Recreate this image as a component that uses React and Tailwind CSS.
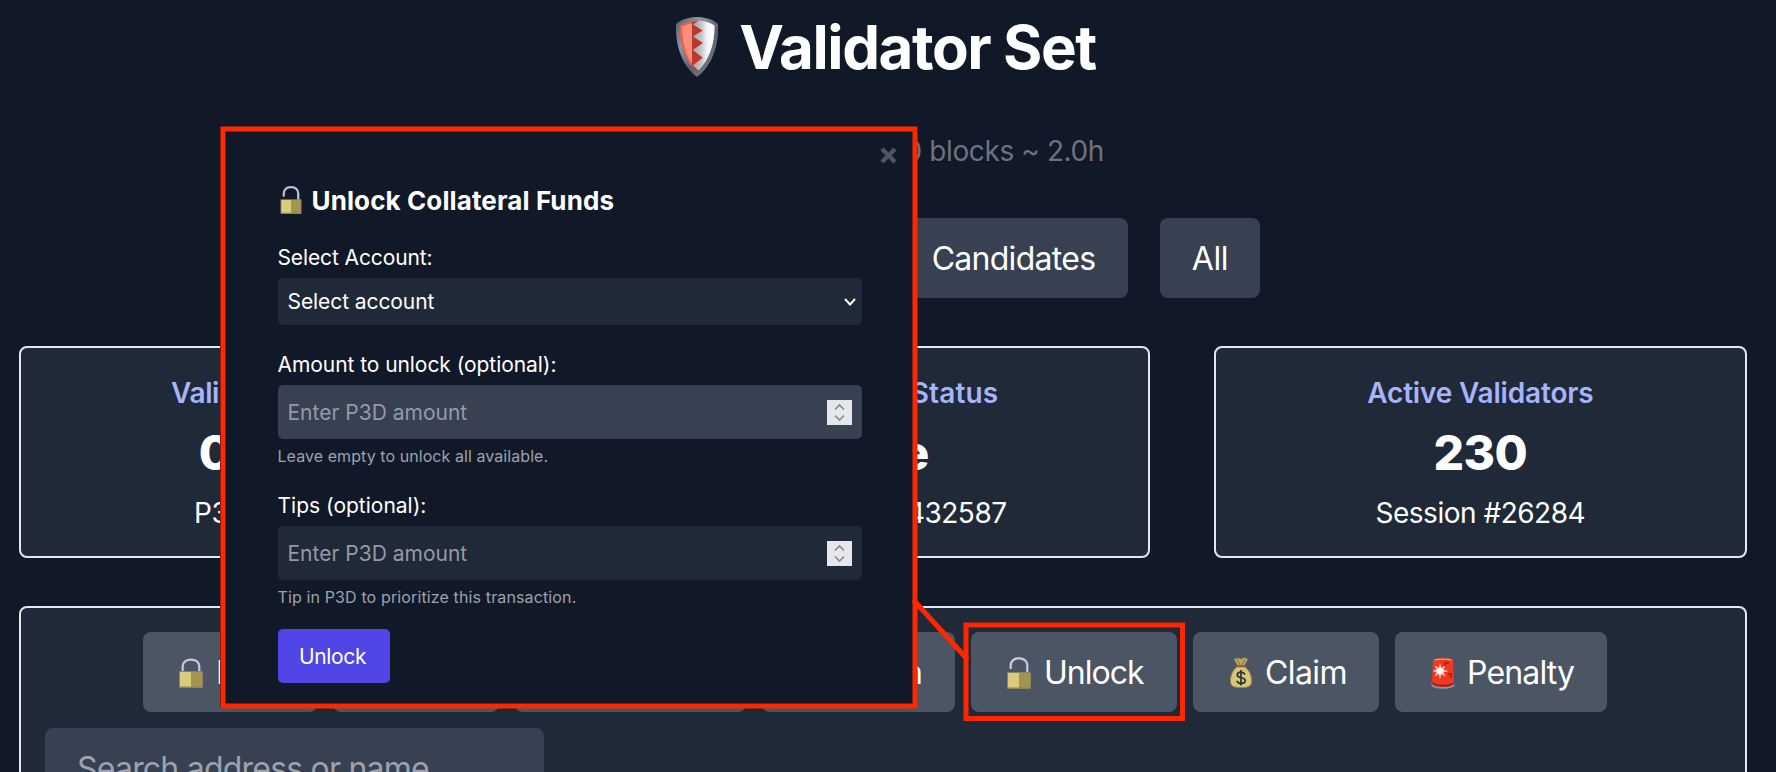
function Shield() {
  return (
    <svg width="44" height="62" viewBox="0 0 44 62" className="shrink-0">
      <defs>
        <linearGradient id="rim" x1="0" y1="0" x2="1" y2="1">
          <stop offset="0" stopColor="#4d5868" />
          <stop offset="0.3" stopColor="#8d98a6" />
          <stop offset="0.6" stopColor="#566172" />
          <stop offset="1" stopColor="#7f8a98" />
        </linearGradient>
        <linearGradient id="steel" x1="0" y1="0" x2="1" y2="0">
          <stop offset="0" stopColor="#a3a6ae" />
          <stop offset="0.4" stopColor="#c6c8cd" />
          <stop offset="0.65" stopColor="#f4f4f6" />
          <stop offset="1" stopColor="#ffffff" />
        </linearGradient>
      </defs>
      <path d="M22 1C30 1 37 3 43 8C44 29 37 50 22 61C7 50 0 29 1 8C7 3 14 1 22 1Z" fill="url(#rim)" />
      <path d="M22 4.500C28 4.500 34 6 39.500 9.500C40 28 34 45 22 56C10 45 4 28 4.500 9.500C10 6 16 4.500 22 4.500Z" fill="#e85f4a" />
      <path d="M7 11C10 9 13 8 17 7.500V47C10 38 7 24 7 11Z" fill="#ff8d7c" />
      <path d="M18 6L25 4.700V14L28 14.500L18 20L28 27L18 34L28 41L18 49L24 55L22 56L17 50V6Z" fill="#b93a2b" />
      <path d="M24 4.600C30 5 35 6.500 39.500 9.500C40 28 34 44 23.500 54.500L18 49.500L28 42L18 34L28 27L18 20.500L28 14.500L18 8.500Z" fill="url(#steel)" />
    </svg>
  );
}

function Lock({ open = false, className = "h-8 w-6" }) {
  const shackle = open ? "M3.700 12V8.500C3.700 -1.200 20.300 -1.200 20.300 8.500V16" : "M3.700 15V9.500C3.700 0.300 20.300 0.300 20.300 9.500V15";
  return (
    <svg viewBox="0 0 24 32" className={`shrink-0 ${className}`}>
      <path d={shackle} fill="none" stroke="#6f7688" strokeWidth="3" />
      <path d={shackle} fill="none" stroke="#cdd0e4" strokeWidth="1.800" />
      <rect x="0" y={open ? 15 : 14} width="24" height="17" rx="0.800" fill="#8d8259" />
      <rect x="1" y={open ? 16 : 15} width="11" height="14.500" fill="#d9cc7c" />
      <rect x="12" y={open ? 16 : 15} width="11" height="14.500" fill="#a39550" />
    </svg>
  );
}

function MoneyBag() {
  return (
    <svg width="22" height="31" viewBox="0 0 22 31" className="shrink-0">
      <path d="M4 2L8 1L11 2L14 0.500L18 2L14.500 8.500H7.500Z" fill="#b9a566" />
      <path d="M7 2L10 8M15 2L12 8" stroke="#8a7440" strokeWidth="1" />
      <path d="M7 10C2 14 0.500 19 0.500 24C0.500 29 3 30.500 11 30.500S21.500 29 21.500 24C21.500 19 20 14 15 10Z" fill="#d6c878" stroke="#a78250" />
      <path d="M6.500 9H15.500" stroke="#a05a3c" strokeWidth="2" />
      <path d="M15 17.500C14 15.600 12.500 15.200 11 15.200C8.800 15.200 7.300 16.400 7.300 18.100C7.300 22 15.200 19.500 15.200 23.500C15.200 25.400 13.400 26.500 11 26.500C9 26.500 7.500 25.700 6.800 23.900M11 13V28.500" fill="none" stroke="#2c3138" strokeWidth="1.700" />
    </svg>
  );
}

function Siren() {
  return (
    <svg width="24" height="32" viewBox="0 0 24 32" className="shrink-0">
      <path d="M0.500 26C0.500 23.500 23.500 23.500 23.500 26V28C23.500 33 0.500 33 0.500 28Z" fill="#8d95a0" />
      <path d="M2 3C2 0.500 22 0.500 22 3L23 26C23 30.500 1 30.500 1 26Z" fill="#ee3a22" />
      <path d="M1 25C4 28.500 20 28.500 23 25V26.500C22 31 2 31 1 26.500Z" fill="#a81d10" />
      <path d="M3.500 3C7 1.800 17 1.800 20.500 3" stroke="#ff9a86" strokeWidth="1.200" fill="none" />
      <path d="M14 9V6H18M17 17H20V21" stroke="#a81d10" strokeWidth="1.500" fill="none" />
      <path d="M9 6L10.300 10.800L14.500 8.500L12.500 12.500L17.500 14L12.500 15.500L14.500 19.500L10.300 17.200L9 22L7.700 17.200L3.500 19.500L5.500 15.500L1.500 14L5.500 12.500L3.500 8.500L7.700 10.800Z" fill="#ffc4be" />
      <circle cx="9" cy="14" r="2.800" fill="#fff" />
    </svg>
  );
}

function StatCard({ title, value, note, titleClass, valueClass = "", noteClass }) {
  return (
    <section className="flex h-[212px] flex-col items-center rounded-lg border-2 border-gray-200 bg-[#1f2937] pt-[27px] whitespace-nowrap">
      <h2 className={`text-[28px] leading-9 font-semibold text-[#a5b4fc] ${titleClass}`}>{title}</h2>
      <p className={`mt-[18px] text-[48px] leading-[48px] font-extrabold ${valueClass}`}>{value}</p>
      <p className={`mt-4 text-[28px] leading-10 ${noteClass}`}>{note}</p>
    </section>
  );
}

function NumberField({ className }) {
  return (
    <div className={`mt-[6px] flex h-[54px] items-center justify-between rounded-[5px] pr-[10px] pl-[10px] ${className}`}>
      <span className="pt-0.5 text-[21px] leading-7 text-[#949ba7]">Enter P3D amount</span>
      <svg width="25" height="25" viewBox="0 0 25 25">
        <rect width="25" height="25" fill="#e6e7ea" />
        <path d="M8 9.500L12.500 5L17 9.500M8 15.500L12.500 20L17 15.500" fill="none" stroke="#858b96" strokeWidth="1.600" />
      </svg>
    </div>
  );
}

function UnlockModal() {
  return (
    <div className="absolute top-[126px] left-[220px] h-[582px] w-[697px] bg-[#111827] pt-[59px] pr-[55px] pl-[57.5px] text-[21px] leading-7">
      <svg width="17" height="17" viewBox="0 0 17 17" className="absolute top-[21px] right-5">
        <path d="M2 2L15 15M15 2L2 15" stroke="#4b5563" strokeWidth="4.400" />
      </svg>
      <h2 className="flex h-8 items-center gap-[10px] pl-[2px] text-[26px] leading-8 font-bold tracking-[0.11px]">
        <Lock open className="-mt-0.5 h-7 w-[22px]" />
        Unlock Collateral Funds
      </h2>
      <div className="mt-[27px] tracking-[-0.11px]">Select Account:</div>
      <div className="mt-[6px] flex h-[47px] items-center justify-between rounded-[5px] bg-[#1f2937] pr-[6px] pl-[10px]">
        <span className="pt-px tracking-[-0.08px]">Select account</span>
        <svg width="12" height="8" viewBox="0 0 12 8">
          <path d="M1 1L6 6.500L11 1" fill="none" stroke="#fff" strokeWidth="2" />
        </svg>
      </div>
      <div className="mt-[26px] tracking-[-0.06px]">Amount to unlock (optional):</div>
      <NumberField className="bg-[#374151]" />
      <p className="mt-[5px] text-base leading-6 tracking-[0.07px] text-[#9ca3af]">Leave empty to unlock all available.</p>
      <div className="mt-[24px]">Tips (optional):</div>
      <NumberField className="bg-[#1f2937]" />
      <p className="mt-[5px] text-base leading-6 tracking-[0.13px] text-[#9ca3af]">Tip in P3D to prioritize this transaction.</p>
      <button className="mt-5 flex h-[54px] w-[112px] items-center justify-center rounded-[5px] bg-[#4f46e5] pt-px pr-0.5 tracking-[-0.34px]">
        Unlock
      </button>
    </div>
  );
}

export default function App() {
  return (
    <div className="relative h-[772px] w-[1776px] overflow-hidden bg-[#111827] pr-[29px] pl-[19px] font-['Inter','Liberation_Sans',sans-serif] text-white">
      <header className="flex h-[94px] items-center justify-center gap-[20px] pl-[5px]">
        <Shield />
        <h1 className="text-[60px] leading-[60px] font-bold tracking-[-1.43px]">Validator Set</h1>
      </header>
      <p className="mx-auto mt-[37px] w-[442px] text-right text-[28px] leading-10 tracking-[-0.39px] whitespace-nowrap text-[#6b7280]">
        Session: 120 blocks ~ 2.0h
      </p>
      <nav className="mt-[47px] flex justify-center gap-8 pl-px text-[32px]">
        <button className="h-20 w-[148px] rounded-lg bg-[#374151]">Active</button>
        <button className="h-20 w-[182px] rounded-lg bg-[#374151]">Waiting</button>
        <button className="h-20 w-[227px] rounded-lg bg-[#374151] pt-0.5 pr-0.5 tracking-[-0.72px]">Candidates</button>
        <button className="h-20 w-[100px] rounded-lg bg-[#374151] pt-0.5 tracking-[-0.41px]">All</button>
      </nav>
      <div className="mt-12 grid grid-cols-3 gap-16">
        <StatCard title="Validator Balance" value="0.0000" note="P3D available" titleClass="tracking-[-0.39px]" valueClass="pl-1.5" noteClass="pr-2 tracking-[-0.3px]" />
        <StatCard title="Validation Status" value="Idle" note="At block #1432587" titleClass="tracking-[0.13px]" valueClass="pl-1.5" noteClass="pl-2 tracking-[-0.49px]" />
        <StatCard title="Active Validators" value="230" note="Session #26284" titleClass="tracking-[-0.18px]" valueClass="tracking-[-0.57px]" noteClass="tracking-[-0.49px]" />
      </div>
      <main className="mt-12 h-[240px] rounded-lg border-2 border-gray-200 bg-[#1f2937] px-6 pt-6">
        <div className="flex justify-center gap-4 pr-4 text-[32px] whitespace-nowrap *:flex *:h-20 *:items-center *:rounded-lg *:bg-[#4b5563] *:pt-px">
          <button className="w-[174px] gap-[13px] pl-9"><Lock />Lock</button>
          <button className="w-[166px] justify-center">Validate</button>
          <button className="w-[231px] justify-center">Revalidate</button>
          <button className="w-[193px] justify-end pr-[32px]">Rejoin</button>
          <button className="w-[206px] gap-[13px] pl-9 tracking-[-0.99px]"><Lock open />Unlock</button>
          <button className="w-[186px] gap-[13px] pl-[37px] tracking-[-0.59px]"><MoneyBag />Claim</button>
          <button className="w-[212px] gap-[12px] pl-9 tracking-[-0.85px]"><Siren />Penalty</button>
        </div>
        <div className="mt-4 flex h-20 w-[499px] items-center rounded-lg bg-[#374151] pt-px pl-8 text-[32px] tracking-[-0.78px] text-[#9ca3af]">
          Search address or name
        </div>
      </main>
      <UnlockModal />
      <svg width="1776" height="772" viewBox="0 0 1776 772" className="pointer-events-none absolute inset-0" fill="none" stroke="#ff2600" strokeWidth="5">
        <rect x="223" y="129" width="692" height="577" />
        <rect x="966" y="625" width="216.500" height="93.500" />
        <path d="M913.500 600L967.500 659.500" />
      </svg>
    </div>
  );
}
